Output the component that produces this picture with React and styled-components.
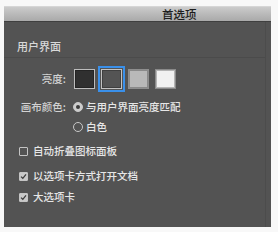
import React from "react";
import styled, { createGlobalStyle } from "styled-components";

const Global = createGlobalStyle`
  html, body { margin: 0; padding: 0; background: #f8f8f8; }
  body { font-family: "Noto Sans CJK SC", "Noto Sans", sans-serif; }
`;

const Page = styled.div`
  padding: 6px 7px 5px 4px;
  width: 278px;
  height: 232px;
  box-sizing: border-box;
`;

const Window = styled.div`
  width: 267px;
  height: 221px;
  display: flex;
  flex-direction: column;
  background: #535353;
`;

const TitleBar = styled.div`
  flex: none;
  background: linear-gradient(#cbcbcb, #a9a9a9);
  border-top: 1px solid #d6d6d6;
  border-bottom: 1px solid #3f3f3f;
  box-sizing: border-box;
  height: 16px;
  display: flex;
  align-items: center;
  padding-left: 158px;
  font-size: 11.5px;
  font-weight: 500;
  line-height: 12px;
  color: #1e1e1e;
`;

const Body = styled.div`
  flex: 1;
  display: flex;
`;

const Main = styled.div`
  flex: 1;
  display: flex;
  flex-direction: column;
`;

const Edge = styled.div`
  width: 5px;
  border-left: 1px solid #4c4c4c;
`;

const SectionHeader = styled.div`
  padding: 18px 0 5px 13px;
  font-size: 11px;
  font-weight: 500;
  line-height: 12px;
  color: #d8d8d8;
  border-bottom: 1px solid #4b4b4b;
`;

const Row = styled.div`
  display: flex;
  align-items: center;
  height: ${(p) => p.$h || 14}px;
  margin-top: ${(p) => p.$mt || 0}px;
  padding-left: ${(p) => p.$pl || 0}px;
  font-size: 10.5px;
  font-weight: 500;
  line-height: 14px;
  color: #e6e6e6;
`;

const Label = styled.div`
  width: 62px;
  text-align: right;
  color: #d2d2d2;
  margin-right: ${(p) => p.$mr || 7}px;
`;

const Swatches = styled.div`
  display: flex;
  gap: 6px;
`;

const Swatch = styled.div`
  width: 21px;
  height: 20px;
  box-sizing: border-box;
  background: ${(p) => p.$c};
  border: 1px solid ${(p) => p.$b};
  box-shadow: inset 0 0 0 1px rgba(0, 0, 0, 0.25);
  outline: ${(p) => (p.$sel ? "2px solid #3a90ea" : "none")};
  outline-offset: 1px;
`;

const Radio = styled.span`
  width: 10px;
  height: 10px;
  box-sizing: border-box;
  border-radius: 50%;
  margin-right: 3px;
  flex: none;
  display: flex;
  align-items: center;
  justify-content: center;
  border: 1px solid #c8c8c8;
  background: ${(p) => (p.$on ? "#cdcdcd" : "transparent")};
  &::after {
    content: "";
    width: 4px;
    height: 4px;
    border-radius: 50%;
    background: #3c3c3c;
    display: ${(p) => (p.$on ? "block" : "none")};
  }
`;

const Check = styled.span`
  width: 9px;
  height: 9px;
  box-sizing: border-box;
  border-radius: 1px;
  margin-right: 5px;
  flex: none;
  display: flex;
  align-items: center;
  justify-content: center;
  border: 1px solid #c4c4c4;
  background: ${(p) => (p.$on ? "#c9c9c9" : "transparent")};
`;

const CheckBox = ({ on }) => (
  <Check $on={on}>
    {on && (
      <svg width="7" height="7" viewBox="0 0 7 7">
        <path d="M1 3.6 L2.8 5.3 L6 1.4" fill="none" stroke="#3d3d3d" strokeWidth="1.3" />
      </svg>
    )}
  </Check>
);

export default function App() {
  return (
    <Page>
      <Global />
      <Window>
        <TitleBar>首选项</TitleBar>
        <Body>
          <Main>
            <SectionHeader>用户界面</SectionHeader>
            <Row $h={20} $mt={11}>
              <Label $mr={8}>亮度:</Label>
              <Swatches>
                <Swatch $c="#303030" $b="#bdbdbd" />
                <Swatch $c="#545454" $b="#c2c2c2" $sel />
                <Swatch $c="#b9b9b9" $b="#8e8e8e" />
                <Swatch $c="#f1f1f1" $b="#8a8a8a" />
              </Swatches>
            </Row>
            <Row $mt={11}>
              <Label>画布颜色:</Label>
              <Radio $on />
              与用户界面亮度匹配
            </Row>
            <Row $mt={6}>
              <Label />
              <Radio />
              白色
            </Row>
            <Row $mt={10} $pl={15}>
              <CheckBox />
              自动折叠图标面板
            </Row>
            <Row $mt={11} $pl={15}>
              <CheckBox on />
              以选项卡方式打开文档
            </Row>
            <Row $mt={7} $pl={15}>
              <CheckBox on />
              大选项卡
            </Row>
          </Main>
          <Edge />
        </Body>
      </Window>
    </Page>
  );
}
